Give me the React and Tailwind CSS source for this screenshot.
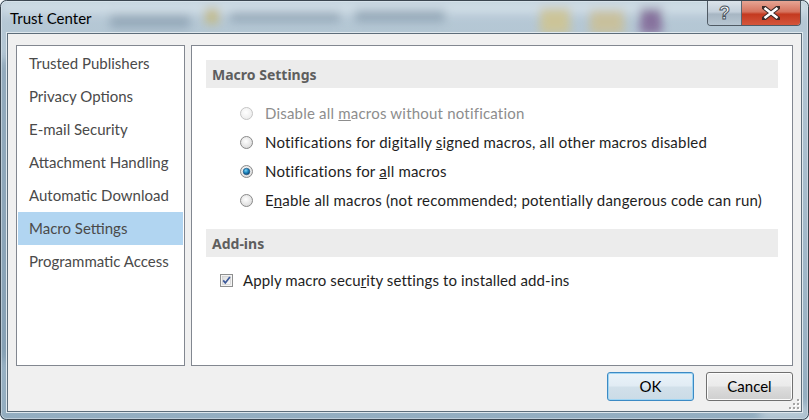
import React from "react";

const sections = [
  "Trusted Publishers",
  "Privacy Options",
  "E-mail Security",
  "Attachment Handling",
  "Automatic Download",
  "Macro Settings",
  "Programmatic Access",
];

/* ---------- little win7 controls ---------- */
function Radio({ checked, disabled }) {
  return (
    <svg width="13" height="13" viewBox="0 0 13 13" className="shrink-0">
      <defs>
        <radialGradient id={"rb" + (disabled ? "d" : "")} cx="0.45" cy="0.4" r="0.7">
          <stop offset="0" stopColor="#ffffff" />
          <stop offset="1" stopColor={disabled ? "#e8e8e8" : "#d4d4d4"} />
        </radialGradient>
        <radialGradient id="dot" cx="0.4" cy="0.35" r="0.7">
          <stop offset="0" stopColor="#7fd3f5" />
          <stop offset="0.5" stopColor="#1c86bf" />
          <stop offset="1" stopColor="#0c3c68" />
        </radialGradient>
      </defs>
      <circle
        cx="6.5"
        cy="6.5"
        r="6"
        fill={`url(#rb${disabled ? "d" : ""})`}
        stroke={disabled ? "#c4c4c4" : "#8a8a8a"}
      />
      {checked && <circle cx="6.5" cy="6.5" r="3.3" fill="url(#dot)" stroke="#1d4f78" strokeWidth="0.6" />}
    </svg>
  );
}

function Check() {
  return (
    <svg width="13" height="13" viewBox="0 0 13 13" className="shrink-0">
      <defs>
        <linearGradient id="cb" x1="0" y1="0" x2="1" y2="1">
          <stop offset="0" stopColor="#dcdcdc" />
          <stop offset="1" stopColor="#fbfbfb" />
        </linearGradient>
      </defs>
      <rect x="0.5" y="0.5" width="12" height="12" fill="#f4f4f4" stroke="#8e8f8f" />
      <rect x="2.5" y="2.5" width="8" height="8" fill="url(#cb)" stroke="#c8c8c8" strokeWidth="0.6" />
      <path d="M3.2 6.4 L5.3 8.9 L9.9 2.9" fill="none" stroke="#3d5a9a" strokeWidth="1.7" />
    </svg>
  );
}

function Option({ children, checked, disabled }) {
  return (
    <div className="flex h-[29px] items-center pl-[48px]">
      <Radio checked={checked} disabled={disabled} />
      <span
        className={
          "ml-[12px] tracking-[0.2px] " + (disabled ? "text-[#8d8d8d]" : "text-[#1e1e1e]")
        }
      >
        {children}
      </span>
    </div>
  );
}

function Header({ children }) {
  return (
    <div className="mx-[14px] flex h-[28px] items-center bg-[#ececec] pl-[6px] font-['Noto_Sans',sans-serif] text-[14px] font-bold text-[#5e5e5e]">
      {children}
    </div>
  );
}

export default function App() {
  return (
    <div className="relative h-[420px] w-[809px] overflow-hidden font-['Lato',sans-serif] text-[15px]">
      {/* aero glass, blurred desktop behind */}
      <svg className="absolute inset-0" width="809" height="420">
        <defs>
          <linearGradient id="glass" x1="0" y1="0" x2="0" y2="1">
            <stop offset="0" stopColor="#b7c9d6" />
            <stop offset="1" stopColor="#93adc0" />
          </linearGradient>
          <filter id="bl">
            <feGaussianBlur stdDeviation="5" />
          </filter>
        </defs>
        <rect width="809" height="420" rx="6" fill="url(#glass)" />
        <g filter="url(#bl)" opacity="0.8">
          <rect x="0" y="0" width="809" height="14" fill="#d6e2ea" />
          <rect x="110" y="14" width="80" height="14" fill="#8da2b3" />
          <rect x="205" y="8" width="14" height="16" fill="#c6b97a" />
          <rect x="230" y="12" width="110" height="10" fill="#8ea2b2" />
          <rect x="355" y="10" width="90" height="12" fill="#8ea2b2" />
          <rect x="540" y="8" width="30" height="26" fill="#d2c48a" />
          <rect x="590" y="10" width="34" height="24" fill="#cdbf8f" />
          <rect x="640" y="8" width="22" height="26" fill="#7b5d90" />
          <rect x="0" y="60" width="8" height="300" fill="#7590a6" />
          <rect x="760" y="405" width="49" height="15" fill="#c4d3dd" />
        </g>
        <rect x="0.5" y="0.5" width="808" height="419" rx="6" fill="none" stroke="#3b4650" />
        <rect x="1.5" y="1.5" width="806" height="417" rx="5" fill="none" stroke="#e6eef4" strokeOpacity="0.5" />
      </svg>

      {/* caption buttons */}
      <div className="absolute right-[8px] top-[1px] flex h-[25px] overflow-hidden rounded-b-[4px] border border-t-0 border-[#4f5a64]">
        <div className="flex w-[34px] items-center justify-center border-r border-[#5a6670] bg-[linear-gradient(180deg,#dbe3ea_0%,#c3cfda_45%,#a7b6c3_55%,#b7c6d2_100%)]">
          <span className="font-['Liberation_Sans',sans-serif] text-[18px] font-bold leading-none text-white [-webkit-text-stroke:1px_#4a5560]">
            ?
          </span>
        </div>
        <div className="flex w-[58px] items-center justify-center bg-[linear-gradient(180deg,#e6a594_0%,#d5735e_45%,#c43a20_55%,#d4553a_100%)]">
          <svg width="18" height="14" viewBox="0 0 18 14">
            <path d="M2 1.5 L16 12.5 M16 1.5 L2 12.5" stroke="#3a2a28" strokeWidth="4.6" strokeLinecap="square" />
            <path d="M2.5 2 L15.5 12 M15.5 2 L2.5 12" stroke="#ffffff" strokeWidth="2.6" />
          </svg>
        </div>
      </div>

      <div className="relative flex h-full flex-col px-[7px] pb-[8px]">
        {/* title */}
        <div className="flex h-[33px] items-start pl-[3px] pt-[8px] text-[15px] leading-[20px] text-black">
          Trust Center
        </div>

        {/* client area */}
        <div className="flex flex-1 flex-col border border-[#5d6d7a] bg-[#f0f0f0] px-[8px] pt-[11px] shadow-[0_0_0_1px_#dfe8ee]">
          <div className="flex h-[321px] gap-[6px]">
            {/* categories */}
            <div className="w-[169px] border border-[#828790] bg-white px-[1px] pt-[1px]">
              {sections.map((s) => (
                <div
                  key={s}
                  className={
                    "flex h-[33px] items-center pl-[11px] text-[#4a4a4a] " +
                    (s === "Macro Settings" ? "bg-[#b1d5f1]" : "")
                  }
                >
                  {s}
                </div>
              ))}
            </div>

            {/* settings */}
            <div className="flex-1 border border-[#828790] bg-white pt-[14px]">
              <Header>Macro Settings</Header>
              <div className="mt-[11px]">
                <Option disabled>
                  Disable all <u>m</u>acros without notification
                </Option>
                <Option>
                  Notifications for digitally <u>s</u>igned macros, all other macros disabled
                </Option>
                <Option checked>
                  Notifications for <u>a</u>ll macros
                </Option>
                <Option>
                  E<u>n</u>able all macros (not recommended; potentially dangerous code can run)
                </Option>
              </div>

              <div className="mt-[14px]">
                <Header>Add-ins</Header>
              </div>
              <div className="mt-[9px] flex h-[29px] items-center pl-[28px]">
                <Check />
                <span className="ml-[10px] tracking-[0.1px] text-[#1e1e1e]">
                  Apply macro secu<u>r</u>ity settings to installed add-ins
                </span>
              </div>
            </div>
          </div>

          {/* buttons */}
          <div className="mt-[6px] flex justify-end gap-[12px]">
            <button className="flex h-[29px] w-[87px] items-center justify-center rounded-[3px] border border-[#3c8ac4] bg-[linear-gradient(180deg,#eaf3f9_0%,#e1ecf4_48%,#d1e0ea_52%,#cbdbe6_100%)] text-black shadow-[inset_0_0_0_1px_#9fd5f3]">
              OK
            </button>
            <button className="flex h-[29px] w-[87px] items-center justify-center rounded-[3px] border border-[#707070] bg-[linear-gradient(180deg,#f2f2f2_0%,#ebebeb_48%,#dddddd_52%,#cfcfcf_100%)] text-black shadow-[inset_0_0_0_1px_#fcfcfc]">
              Cancel
            </button>
          </div>

          {/* size grip */}
          <div className="relative flex-1">
            <svg className="absolute bottom-[1px] right-[-7px]" width="11" height="11" viewBox="0 0 11 11">
              {[
                [8, 0],
                [4, 4],
                [8, 4],
                [0, 8],
                [4, 8],
                [8, 8],
              ].map(([x, y]) => (
                <g key={x + "-" + y}>
                  <rect x={x + 1} y={y + 1} width="2" height="2" fill="#ffffff" />
                  <rect x={x} y={y} width="2" height="2" fill="#a4a4a4" />
                </g>
              ))}
            </svg>
          </div>
        </div>
      </div>
    </div>
  );
}
